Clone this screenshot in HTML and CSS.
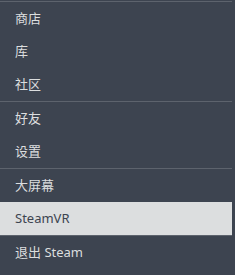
FILE: index.html
```html
<!DOCTYPE html>
<html lang="zh-CN">
<head>
  <meta charset="UTF-8" />
  <title>Steam Menu</title>
  <link rel="stylesheet" href="styles.css">
</head>
<body>
  <div class="menu">
    <div class="group">
      <div class="item">商店</div>
      <div class="item">库</div>
      <div class="item">社区</div>
    </div>
    <div class="group">
      <div class="item">好友</div>
      <div class="item">设置</div>
    </div>
    <div class="group">
      <div class="item">大屏幕</div>
      <div class="item active">SteamVR</div>
    </div>
    <div class="group">
      <div class="item">退出 Steam</div>
    </div>
  </div>
</body>
</html>
```

FILE: styles.css
```css
* {
  box-sizing: border-box;
}
body {
  margin: 0;
  padding: 0;
  background: #3d4450;
  font-family: "Noto Sans", "Noto Sans CJK SC", sans-serif;
  font-size: 13px;
}
.menu {
  width: 232px;
  margin-top: 1px;
}
.group {
  border-top: 1px solid #5d636d;
}
.item {
  height: 33px;
  line-height: 33px;
  padding-left: 15px;
  color: #dcdedf;
}
.item.active {
  background: #dcdedf;
  color: #3d4450;
}
```
